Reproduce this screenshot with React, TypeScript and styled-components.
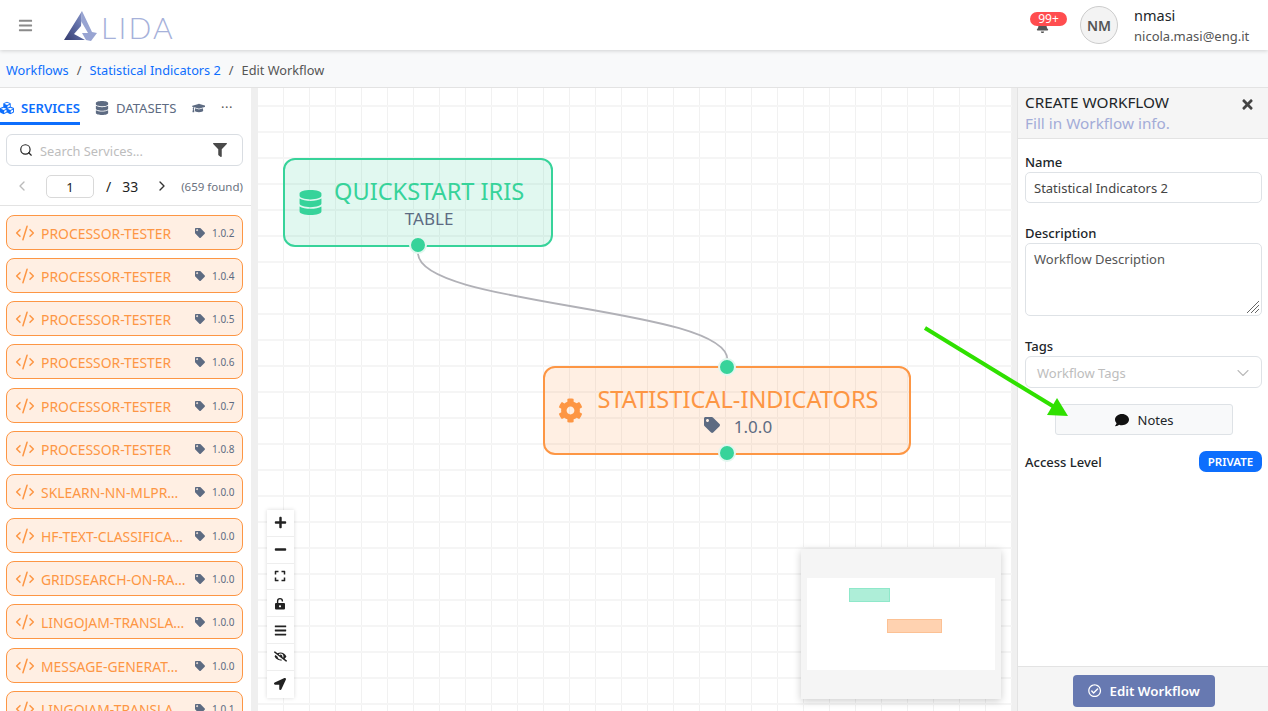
import React from "react";
import styled, { createGlobalStyle } from "styled-components";
import {
  FaBars, FaBell, FaCubes, FaDatabase, FaGraduationCap, FaFilter, FaTag, FaCog,
  FaComment, FaTimes, FaPlus, FaMinus, FaExpand, FaEyeSlash, FaLocationArrow, FaRegCheckCircle,
} from "react-icons/fa";
import { ChevronLeft, ChevronRight, ChevronDown, CodeXml, Search as SearchGlyph } from "lucide-react";

const FONT = `"Noto Sans", "Open Sans", sans-serif`;

const Global = createGlobalStyle`
  html, body { margin: 0; padding: 0; height: 100%; overflow: hidden; background: #fff; }
  * { box-sizing: border-box; }
  body { font-family: ${FONT}; color: #212529; }
`;

const Page = styled.div`
  width: 1268px; height: 711px; display: flex; flex-direction: column; overflow: hidden; position: relative;
`;
const Header = styled.header`
  height: 50px; flex: none; display: flex; align-items: center; background: #fff;
  box-shadow: 0 1px 4px rgba(0,0,0,.16); position: relative; z-index: 3; padding: 0 18px;
`;
const Burger = styled.div` color: #8a8a8a; font-size: 15px; display: flex; width: 46px; `;
const Logo = styled.div` display: flex; align-items: flex-start; height: 32px; `;
const LogoText = styled.span`
  font-family: "Lato", sans-serif; font-weight: 300; font-size: 30px; line-height: 32px; letter-spacing: 2.2px;
  color: #a6b1da; margin-left: 3px; margin-top: 2px;
`;
const HeaderRight = styled.div` margin-left: auto; display: flex; align-items: center; `;
const BellWrap = styled.div` position: relative; width: 36px; height: 30px; margin-right: 14px; color: #444; `;
const Badge = styled.span`
  position: absolute; top: 2px; left: 0; width: 37px; height: 14px; border-radius: 7px; background: #ff4d4f; color: #fff;
  font-size: 12px; line-height: 14px; text-align: center;
`;
const BellIcon = styled(FaBell)` position: absolute; left: 6px; top: 10px; font-size: 13px; color: #555; `;
const Avatar = styled.div`
  width: 38px; height: 38px; border-radius: 50%; background: #f3f3f3; border: 1px solid #ccc; color: #555; font-size: 14px;
  font-weight: 600; display: flex; align-items: center; justify-content: center; margin-right: 16px;
`;
const User = styled.div` display: flex; flex-direction: column; width: 116px; `;
const UserName = styled.span` font-size: 14.5px; line-height: 22px; color: #212529; `;
const UserMail = styled.span` font-size: 13px; line-height: 20px; color: #555; `;

const Crumbs = styled.nav`
  height: 38px; flex: none; display: flex; align-items: center; gap: 8px; padding: 2px 6px 0; background: #f8f9fa;
  border-bottom: 1px solid #e3e3e3; font-size: 12.75px; color: #555;
`;
const Crumb = styled.a` color: #0d6efd; `;

const Main = styled.div` flex: 1; display: flex; min-height: 0; `;

const Sidebar = styled.aside`
  width: 251px; flex: none; background: #fff; display: flex; flex-direction: column; overflow: hidden;
`;
const Tabs = styled.div` height: 37px; flex: none; display: flex; align-items: flex-end; position: relative; overflow: hidden; `;
const Tab = styled.div<{ $active?: boolean; $after: number }>`
  display: flex; align-items: center; gap: 7px; height: 37px; padding-top: 6px; font-size: 13.1px; white-space: nowrap; flex: none;
  margin-right: ${p => p.$after}px; font-weight: ${p => (p.$active ? 600 : 400)}; color: ${p => (p.$active ? "#0d6efd" : "#5d6b82")};
  border-bottom: 3px solid ${p => (p.$active ? "#0d6efd" : "transparent")};
`;
const TabIcon = styled.span` font-size: 14px; display: flex; `;
const More = styled.div`
  position: absolute; right: 0; top: 0; width: 46px; height: 36px; background: #fff; color: #555; font-size: 13px;
  display: flex; align-items: flex-start; justify-content: center; padding-top: 10px; padding-right: 2px; letter-spacing: .5px;
`;
const Search = styled.div`
  margin: 9px 8px 0 6px; height: 32px; flex: none; border: 1px solid #d9dde2; border-radius: 6px; display: flex; align-items: center; padding: 0 8px 0 12px;
`;
const SearchText = styled.span` font-size: 12.8px; color: #bdbdbd; margin-left: 7px; flex: 1; padding-top: 1px; `;
const FilterIcon = styled(FaFilter)` font-size: 14px; color: #4a4a4a; margin-right: 7px; `;
const Pager = styled.div`
  height: 39px; flex: none; display: flex; align-items: center; padding: 0 8px 0 14px; border-bottom: 1px solid #e3e3e3; font-size: 13px; margin-top: 1px;
`;
const PageInput = styled.div`
  width: 48px; height: 23px; border: 1px solid #d9d9d9; border-radius: 5px; margin: 0 1px 0 16px; text-align: center; font-size: 13px; line-height: 22px; color: #222;
`;
const PageText = styled.span` margin-left: 11px; color: #222; font-size: 14px; `;
const NextIcon = styled(ChevronRight)` margin-left: 16px; `;
const Found = styled.span` margin-left: auto; font-size: 11.5px; color: #6b7280; `;
const List = styled.div` display: flex; flex-direction: column; gap: 8.33px; padding: 8.5px 8px 0 6px; `;
const Item = styled.div`
  height: 35px; flex: none; display: flex; align-items: center; border: 1px solid #fd9644; border-radius: 8px; background: #ffefe3; padding: 1px 7px 0 8px; color: #fd9644;
`;
const ItemIcon = styled(CodeXml)` flex: none; `;
const ItemName = styled.span`
  font-size: 13.9px; margin-left: 6px; margin-right: 9px; padding-top: 1px; width: 145px; white-space: nowrap; flex: none;
`;
const ItemTag = styled(FaTag)` font-size: 10px; color: #5d6b82; flex: none; `;
const ItemVer = styled.span` font-size: 10px; color: #5d6b82; margin-left: 7px; white-space: nowrap; `;

const Canvas = styled.main`
  flex: 1; position: relative; overflow: hidden; border-left: 7px solid #efefef; border-right: 5px solid #f0f0f0;
  background-color: #fff;
  background-image: linear-gradient(#f5f5f5 2px, transparent 2px), linear-gradient(90deg, #f1f1f1 1.5px, transparent 1.5px);
  background-size: 26px 26px;
  background-position: 25px 17px;
`;
const Edges = styled.svg` position: absolute; left: 0; top: 0; width: 100%; height: 100%; `;
const Node = styled.div<{ $x: number; $y: number; $w: number; $kind: "data" | "svc" }>`
  position: absolute; left: ${p => p.$x}px; top: ${p => p.$y}px; width: ${p => p.$w}px; height: 89px;
  border: 2px solid ${p => (p.$kind === "data" ? "#37d39a" : "#fd9644")}; border-radius: 12px;
  background: ${p => (p.$kind === "data" ? "rgba(55,211,154,.15)" : "rgba(253,150,68,.15)")};
  color: ${p => (p.$kind === "data" ? "#37d39a" : "#fd9644")};
  display: flex; align-items: center;
`;
const NodeIcon = styled.div` font-size: 25px; display: flex; margin-left: 13px; flex: none; `;
const NodeBody = styled.div` flex: 1; display: flex; flex-direction: column; align-items: center; padding-left: 11px; padding-right: 27px; `;
const NodeTitle = styled.div` font-size: 23.6px; line-height: 32px; white-space: nowrap; `;
const NodeSub = styled.div` font-size: 17px; line-height: 24px; color: #5d6b82; display: flex; align-items: center; gap: 14px; `;
const SubTag = styled(FaTag)` font-size: 16px; margin-top: -4px; `;
const Handle = styled.span<{ $pos: "top" | "bottom" }>`
  position: absolute; left: 50%; ${p => p.$pos}: ${p => (p.$pos === "top" ? -10 : -9)}px; margin-left: -9px; width: 18px; height: 18px; border-radius: 50%;
  background: #37d39a; border: 2px solid #e2f7ef;
`;
const Controls = styled.div`
  position: absolute; left: 8.5px; top: 422px; width: 27px; background: #fff; box-shadow: 0 0 4px rgba(0,0,0,.15); display: flex; flex-direction: column;
`;
const Ctl = styled.div`
  height: 26.8px; display: flex; align-items: center; justify-content: center; font-size: 12px; color: #222; border-bottom: 1px solid #eee;
  &:last-child { border-bottom: 0; }
`;
const Minimap = styled.div`
  position: absolute; left: 543px; top: 461px; width: 200px; height: 150px; background: #f5f5f5; box-shadow: 0 2px 8px rgba(0,0,0,.2); padding: 29px 6px 0;
`;
const MiniView = styled.div` width: 188px; height: 92px; background: #fff; position: relative; `;
const MiniNode = styled.div<{ $x: number; $y: number; $w: number; $kind: "data" | "svc" }>`
  position: absolute; left: ${p => p.$x}px; top: ${p => p.$y}px; width: ${p => p.$w}px; height: 14px;
  background: ${p => (p.$kind === "data" ? "#aeeed8" : "#ffd2b0")};
  border: 1px solid ${p => (p.$kind === "data" ? "#8fe8ca" : "#fcc194")};
`;

const Panel = styled.aside`
  width: 251px; flex: none; background: #fff; display: flex; flex-direction: column; border-left: 1px solid #e3e3e3;
`;
const PanelHead = styled.div`
  height: 51px; flex: none; background: #f5f5f5; border-bottom: 1px solid #e3e3e3; padding: 3px 14px 0 7px; position: relative;
`;
const PanelTitle = styled.div` font-size: 15.3px; line-height: 22px; color: #212529; `;
const PanelSub = styled.div` font-size: 15.3px; line-height: 21px; color: #a3acd8; `;
const Close = styled(FaTimes)` position: absolute; right: 13px; top: 9px; font-size: 15px; color: #444; `;
const PanelBody = styled.div` flex: 1; padding: 13px 6px 0 7px; display: flex; flex-direction: column; `;
const Label = styled.div` font-size: 13px; line-height: 20px; font-weight: 500; color: #212529; `;
const Input = styled.div`
  height: 31px; border: 1px solid #dee2e6; border-radius: 5px; font-size: 13px; line-height: 30px; padding-left: 8px; color: #444; margin-bottom: 20px; flex: none;
`;
const TextArea = styled.div`
  height: 73px; border: 1px solid #dee2e6; border-radius: 5px; font-size: 13px; line-height: 20px; padding: 5px 8px; color: #555; margin-bottom: 20px; flex: none; position: relative;
`;
const Resizer = styled.svg` position: absolute; right: 1px; bottom: 1px; width: 14px; height: 14px; `;
const Select = styled.div`
  height: 32px; border: 1px solid #dee2e6; border-radius: 6px; font-size: 13px; color: #bdbdbd; display: flex; align-items: center; justify-content: space-between; padding: 1px 8px 0 11px; flex: none;
`;
const NotesBtn = styled.div`
  width: 178px; height: 31px; margin: 16px 0 0 30px; flex: none; background: #f8f9fa; border: 1px solid #dee2e6; border-radius: 3px; display: flex; align-items: center; justify-content: center; gap: 9px; font-size: 13px; color: #212529;
`;
const NoteIcon = styled(FaComment)` font-size: 14px; color: #111; `;
const AccessRow = styled.div` display: flex; align-items: center; justify-content: space-between; margin-top: 16px; `;
const Private = styled.span`
  background: #0d6efd; color: #fff; font-size: 11.5px; font-weight: 600; border-radius: 7px; width: 63px; height: 21px; display: flex; align-items: center; justify-content: center;
`;
const PanelFoot = styled.div`
  height: 45px; flex: none; background: #f5f5f5; border-top: 1px solid #e3e3e3; display: flex; justify-content: center; padding: 8px 0 0 2px;
`;
const Submit = styled.div`
  width: 142px; height: 32px; background: #6779b1; color: #fff; border-radius: 4px; display: flex; align-items: center; justify-content: center; gap: 8px; font-size: 13.3px; font-weight: 600;
`;
const Overlay = styled.svg` position: absolute; left: 0; top: 0; width: 1268px; height: 711px; pointer-events: none; z-index: 5; `;

const items: [string, string][] = [
  ["PROCESSOR-TESTER", "1.0.2"], ["PROCESSOR-TESTER", "1.0.4"], ["PROCESSOR-TESTER", "1.0.5"], ["PROCESSOR-TESTER", "1.0.6"],
  ["PROCESSOR-TESTER", "1.0.7"], ["PROCESSOR-TESTER", "1.0.8"], ["SKLEARN-NN-MLPR…", "1.0.0"], ["HF-TEXT-CLASSIFICA…", "1.0.0"],
  ["GRIDSEARCH-ON-RA…", "1.0.0"], ["LINGOJAM-TRANSLA…", "1.0.0"], ["MESSAGE-GENERAT…", "1.0.0"], ["LINGOJAM-TRANSLA…", "1.0.1"],
];

export default function App() {
  return (
    <Page>
      <Global />
      <Header>
        <Burger><FaBars /></Burger>
        <Logo>
          <svg width="34" height="32" viewBox="0 0 34 32">
            <defs>
              <linearGradient id="lg" x1="0" y1="1" x2="1" y2="0">
                <stop offset="0" stopColor="#343b6e" />
                <stop offset="0.55" stopColor="#5f6da6" />
                <stop offset="1" stopColor="#8f9bcb" />
              </linearGradient>
            </defs>
            <path d="M18 2 L0 31 L21 31 L10 25 L17 17 Z" fill="url(#lg)" />
            <path d="M18 2 L28 23 L33 24 L27 32 L22 31 L18 24 L24 24 L17 12 Z" fill="#98a4d2" />
          </svg>
          <LogoText>LIDA</LogoText>
        </Logo>
        <HeaderRight>
          <BellWrap><BellIcon /><Badge>99+</Badge></BellWrap>
          <Avatar>NM</Avatar>
          <User><UserName>nmasi</UserName><UserMail>nicola.masi@eng.it</UserMail></User>
        </HeaderRight>
      </Header>
      <Crumbs>
        <Crumb>Workflows</Crumb><span>/</span><Crumb>Statistical Indicators 2</Crumb><span>/</span><span>Edit Workflow</span>
      </Crumbs>
      <Main>
        <Sidebar>
          <Tabs>
            <Tab $active $after={15}><TabIcon><FaCubes /></TabIcon>SERVICES</Tab>
            <Tab $after={16}><TabIcon><FaDatabase /></TabIcon>DATASETS</Tab>
            <Tab $after={0}><TabIcon><FaGraduationCap /></TabIcon></Tab>
            <More>···</More>
          </Tabs>
          <Search>
            <SearchGlyph size={14} color="#222" strokeWidth={2} />
            <SearchText>Search Services...</SearchText>
            <FilterIcon />
          </Search>
          <Pager>
            <ChevronLeft size={16} color="#bbb" />
            <PageInput>1</PageInput>
            <PageText>/</PageText>
            <PageText>33</PageText>
            <NextIcon size={16} color="#333" />
            <Found>(659 found)</Found>
          </Pager>
          <List>
            {items.map(([n, v], i) => (
              <Item key={i}>
                <ItemIcon size={20} strokeWidth={1.8} />
                <ItemName>{n}</ItemName>
                <ItemTag />
                <ItemVer>{v}</ItemVer>
              </Item>
            ))}
          </List>
        </Sidebar>
        <Canvas>
          <Edges>
            <path d="M160 165 C160 218.5, 469.5 218.5, 469.5 272" fill="none" stroke="#b1b1b7" strokeWidth="1.8" />
          </Edges>
          <Node $kind="data" $x={25} $y={70} $w={270}>
            <NodeIcon><FaDatabase /></NodeIcon>
            <NodeBody>
              <NodeTitle>QUICKSTART IRIS</NodeTitle>
              <NodeSub>TABLE</NodeSub>
            </NodeBody>
            <Handle $pos="bottom" />
          </Node>
          <Node $kind="svc" $x={285} $y={278} $w={368}>
            <Handle $pos="top" />
            <NodeIcon><FaCog /></NodeIcon>
            <NodeBody>
              <NodeTitle>STATISTICAL-INDICATORS</NodeTitle>
              <NodeSub><SubTag />1.0.0</NodeSub>
            </NodeBody>
            <Handle $pos="bottom" />
          </Node>
          <Controls>
            <Ctl><FaPlus size={13} /></Ctl>
            <Ctl><FaMinus size={13} /></Ctl>
            <Ctl><FaExpand size={12} /></Ctl>
            <Ctl>
              <svg width="12" height="13" viewBox="0 0 12 13">
                <path d="M3.6 6.5V4a2.4 2.4 0 0 1 4.8 0v.6" fill="none" stroke="#222" strokeWidth="1.4" />
                <path d="M2 6h8a1 1 0 0 1 1 1v4.5a1 1 0 0 1-1 1H2a1 1 0 0 1-1-1V7a1 1 0 0 1 1-1zm4 2.2a1.1 1.1 0 1 0 0 2.2 1.1 1.1 0 0 0 0-2.2z" fill="#222" fillRule="evenodd" />
              </svg>
            </Ctl>
            <Ctl><FaBars size={13} /></Ctl>
            <Ctl><FaEyeSlash size={13} /></Ctl>
            <Ctl><FaLocationArrow size={12} /></Ctl>
          </Controls>
          <Minimap>
            <MiniView>
              <MiniNode $kind="data" $x={42} $y={10} $w={41} />
              <MiniNode $kind="svc" $x={80} $y={41} $w={55} />
            </MiniView>
          </Minimap>
        </Canvas>
        <Panel>
          <PanelHead>
            <PanelTitle>CREATE WORKFLOW</PanelTitle>
            <PanelSub>Fill in Workflow info.</PanelSub>
            <Close />
          </PanelHead>
          <PanelBody>
            <Label>Name</Label>
            <Input>Statistical Indicators 2</Input>
            <Label>Description</Label>
            <TextArea>
              Workflow Description
              <Resizer viewBox="0 0 14 14">
                <path d="M13 1 L1 13 M13 5 L5 13 M13 9 L9 13" stroke="#666" strokeWidth="1" />
              </Resizer>
            </TextArea>
            <Label>Tags</Label>
            <Select>Workflow Tags<ChevronDown size={20} color="#bbb" strokeWidth={1.3} /></Select>
            <NotesBtn><NoteIcon />Notes</NotesBtn>
            <AccessRow><Label>Access Level</Label><Private>PRIVATE</Private></AccessRow>
          </PanelBody>
          <PanelFoot>
            <Submit><FaRegCheckCircle />Edit Workflow</Submit>
          </PanelFoot>
        </Panel>
      </Main>
      <Overlay viewBox="0 0 1268 711">
        <path d="M925 328 L1056 408" stroke="#2fe000" strokeWidth="4" fill="none" />
        <path d="M1057 398 L1068 416 L1047 415 Z" fill="#2fe000" />
      </Overlay>
    </Page>
  );
}
